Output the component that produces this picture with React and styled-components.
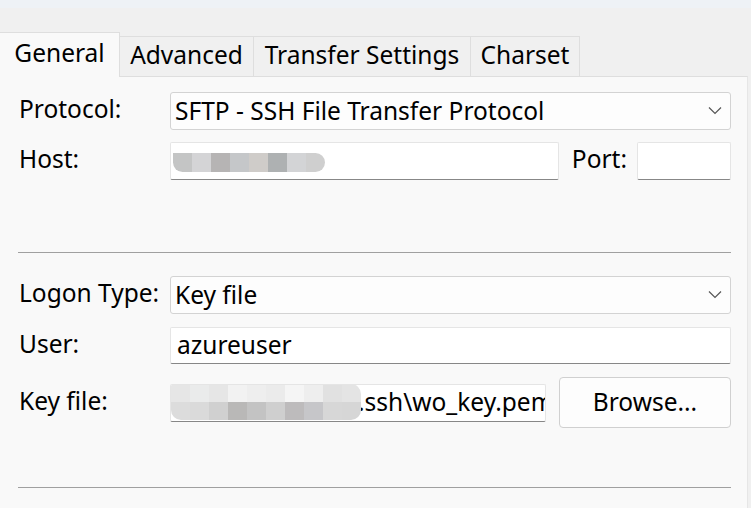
import React from "react";
import styled, { createGlobalStyle } from "styled-components";

const GlobalStyle = createGlobalStyle`
  html, body {
    margin: 0;
    padding: 0;
    background: #f0f0f0;
  }
  body {
    font-family: "Noto Sans", "Open Sans", sans-serif;
    font-size: 24.5px;
    color: #000;
  }
`;

const Window = styled.div`
  width: 751px;
  height: 508px;
  overflow: hidden;
  display: flex;
  flex-direction: column;
  background: #f0f0f0;
`;

const TopStrip = styled.div`
  height: 8px;
  background: #eef2f6;
  flex: none;
`;

const TabBar = styled.div`
  display: flex;
  align-items: flex-end;
  height: 68px;
  flex: none;
  position: relative;
  z-index: 1;
`;

const Tab = styled.div`
  box-sizing: border-box;
  width: ${(p) => p.width}px;
  height: ${(p) => (p.active ? 45 : 41)}px;
  display: flex;
  align-items: center;
  justify-content: center;
  background: ${(p) => (p.active ? "#f9f9f9" : "#f0f0f0")};
  border: 1px solid #dedede;
  border-bottom: ${(p) => (p.active ? "1px solid #f9f9f9" : "1px solid #dedede")};
  border-left: ${(p) => (p.first ? "none" : "1px solid #dedede")};
  margin-left: ${(p) => (p.first ? 0 : -1)}px;
  margin-bottom: -1px;
  line-height: 1;
  padding-bottom: 2px;
  white-space: nowrap;
`;

const Panel = styled.div`
  flex: 1;
  width: 748px;
  box-sizing: border-box;
  background: #f9f9f9;
  border-top: 1px solid #dedede;
  border-right: 1px solid #e6e6e6;
  padding: 15px 16px 0 18px;
`;

const Group = styled.div`
  display: flex;
  flex-direction: column;
  gap: ${(p) => p.gap}px;
  margin-top: ${(p) => p.top || 0}px;
`;

const Row = styled.div`
  display: grid;
  grid-template-columns: 152px minmax(0, 1fr);
  align-items: center;
  min-height: ${(p) => p.h || 38}px;
`;

const Label = styled.div`
  padding-left: 1px;
  white-space: nowrap;
  line-height: 1;
  padding-bottom: 3px;
  margin: ${(p) => p.margin || 0};
`;

const Select = styled.div`
  box-sizing: border-box;
  height: 38px;
  display: flex;
  align-items: center;
  justify-content: space-between;
  background: #fdfdfd;
  border: 1px solid #d3d3d3;
  border-radius: 3px;
  padding: 0 8px 2px 4px;
  white-space: nowrap;
`;

const Chevron = () => (
  <svg width="14" height="9" viewBox="0 0 14 9">
    <polyline points="1,1.5 7,7.5 13,1.5" fill="none" stroke="#555" strokeWidth="1.2" />
  </svg>
);

const Field = styled.div`
  box-sizing: border-box;
  position: relative;
  height: ${(p) => p.h || 38}px;
  width: ${(p) => (p.w ? `${p.w}px` : "auto")};
  flex: ${(p) => (p.w ? "none" : 1)};
  min-width: 0;
  display: flex;
  align-items: center;
  background: #fff;
  border: 1px solid #e5e5e5;
  border-bottom: 1px solid #878787;
  border-radius: 2px;
  padding: 0 6px 2px 6px;
  white-space: nowrap;
  overflow: hidden;
`;

const Inline = styled.div`
  display: flex;
  align-items: center;
  gap: ${(p) => p.gap}px;
  min-width: 0;
`;

const Mosaic = styled.div`
  position: absolute;
  left: ${(p) => p.left}px;
  top: ${(p) => p.top}px;
  display: grid;
  grid-template-columns: repeat(${(p) => p.cols}, 19px);
  grid-auto-rows: ${(p) => p.rowH}px;
  border-radius: 0 10px 10px 10px;
  overflow: hidden;
`;

const Cell = styled.div`
  background: ${(p) => p.color};
`;

const FieldText = styled.span`
  flex: none;
  margin-left: ${(p) => p.indent || 0}px;
`;

const Divider = styled.div`
  height: 1px;
  background: #a0a0a0;
  margin-top: ${(p) => p.top}px;
`;

const Button = styled.div`
  box-sizing: border-box;
  width: 172px;
  height: 51px;
  flex: none;
  display: flex;
  align-items: center;
  justify-content: center;
  background: #fdfdfd;
  border: 1px solid #d0d0d0;
  border-radius: 4px;
  padding-bottom: 2px;
`;

const hostCells = ["#c4c5c5", "#d4d4d6", "#b6b4b4", "#c5c7c9", "#cfccc9", "#aeb1b2", "#d3d4d6", "#cfcfcf"];
const keyCells = [
  "#e6e6e6", "#eaebeb", "#e6e6e6", "#f2f2f2", "#eeeeee", "#ebebeb", "#f5f5f5", "#eeeeee", "#e1e1e1", "#e4e4e4",
  "#dcdcdc", "#dadada", "#d0d0d0", "#b9b8b7", "#c3c3c3", "#cfcfcf", "#bdbbbc", "#c6c6c9", "#d7d7d7", "#d6d6d6",
];

const tabs = [
  { name: "General", width: 120 },
  { name: "Advanced", width: 135 },
  { name: "Transfer Settings", width: 218 },
  { name: "Charset", width: 110 },
];

export default function App() {
  return (
    <Window>
      <GlobalStyle />
      <TopStrip />
      <TabBar>
        {tabs.map((t, i) => (
          <Tab key={t.name} width={t.width} active={i === 0} first={i === 0}>
            {t.name}
          </Tab>
        ))}
      </TabBar>
      <Panel>
        <Group gap={12}>
          <Row>
            <Label>Protocol:</Label>
            <Select>
              SFTP - SSH File Transfer Protocol
              <Chevron />
            </Select>
          </Row>
          <Row>
            <Label>Host:</Label>
            <Inline gap={0}>
              <Field>
                <Mosaic left={2} top={10} cols={8} rowH={19}>
                  {hostCells.map((c, i) => (
                    <Cell key={i} color={c} />
                  ))}
                </Mosaic>
              </Field>
              <Label margin="0 10px 0 12px">Port:</Label>
              <Field w={94} />
            </Inline>
          </Row>
        </Group>
        <Divider top={72} />
        <Group gap={13} top={23}>
          <Row>
            <Label>Logon Type:</Label>
            <Select>
              Key file
              <Chevron />
            </Select>
          </Row>
          <Row h={37}>
            <Label>User:</Label>
            <Field h={37}>azureuser</Field>
          </Row>
          <Row h={51}>
            <Label>Key file:</Label>
            <Inline gap={13}>
              <Field>
                <Mosaic left={0} top={-1} cols={10} rowH={18}>
                  {keyCells.map((c, i) => (
                    <Cell key={i} color={c} />
                  ))}
                </Mosaic>
                <FieldText indent={181}>.ssh\wo_key.pem</FieldText>
              </Field>
              <Button>Browse...</Button>
            </Inline>
          </Row>
        </Group>
        <Divider top={59} />
      </Panel>
    </Window>
  );
}
